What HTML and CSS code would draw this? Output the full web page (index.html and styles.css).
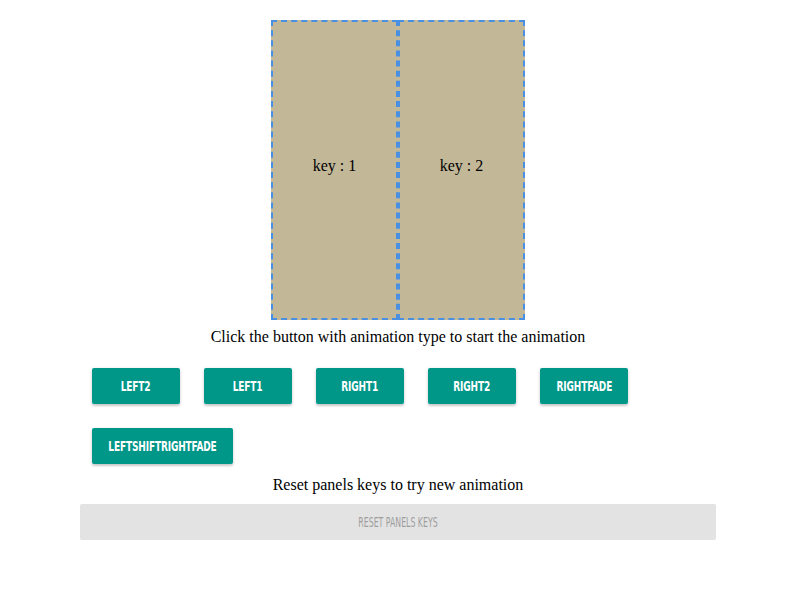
FILE: index.html
```html
<!DOCTYPE html>
<html>
<head>
<meta charset="utf-8">
<link rel="stylesheet" href="styles.css">
</head>
<body>
<div class="wrap">
  <div class="panels">
    <div class="panel">key : 1</div>
    <div class="panel">key : 2</div>
  </div>
  <p class="hint">Click the button with animation type to start the animation</p>
  <div class="buttons">
    <button class="btn"><span class="label">LEFT2</span></button>
    <button class="btn"><span class="label">LEFT1</span></button>
    <button class="btn"><span class="label">RIGHT1</span></button>
    <button class="btn"><span class="label">RIGHT2</span></button>
    <button class="btn"><span class="label">RIGHTFADE</span></button>
    <button class="btn btn-wide"><span class="label">LEFTSHIFTRIGHTFADE</span></button>
  </div>
  <p class="hint2">Reset panels keys to try new animation</p>
  <button class="reset"><span class="reset-label">RESET PANELS KEYS</span></button>
</div>
</body>
</html>
```
FILE: styles.css
```css
body {
  margin: 8px;
  font-family: "Liberation Serif", "Times New Roman", serif;
  font-size: 16px;
  color: #000;
  background: #fff;
}
.wrap {
  width: 636px;
  margin-left: 72px;
}
.panels {
  display: flex;
  justify-content: center;
  margin-top: 12px;
}
.panel {
  width: 123px;
  height: 288px;
  padding-bottom: 8px;
  background: #c2b898;
  border: 2px dashed #4a90e2;
  display: flex;
  align-items: center;
  justify-content: center;
}
.hint {
  margin: 8px 0 0;
  text-align: center;
  line-height: 18px;
}
.buttons {
  display: flex;
  flex-wrap: wrap;
  margin-top: 10px;
}
.btn {
  display: flex;
  align-items: center;
  justify-content: center;
  height: 36px;
  width: 88px;
  margin: 12px;
  padding: 0;
  border: none;
  border-radius: 2px;
  background: #009688;
  color: #fff;
  font-family: "DejaVu Sans Condensed", "Liberation Sans", sans-serif;
  font-weight: bold;
  font-size: 14.5px;
  white-space: nowrap;
  overflow: visible;
  box-shadow: 0 2px 2px rgba(0,0,0,0.14), 0 1px 4px rgba(0,0,0,0.12);
}
.btn-wide {
  width: 141px;
}
.label {
  display: inline-block;
  flex-shrink: 0;
  transform: scaleX(0.69);
  letter-spacing: -0.2px;
}
.hint2 {
  margin: 0;
  text-align: center;
  line-height: 18px;
}
.reset {
  display: block;
  width: 636px;
  height: 36px;
  margin-top: 10px;
  border: none;
  border-radius: 2px;
  background: #e3e3e3;
  color: #9e9e9e;
  font-family: "DejaVu Sans Condensed", "Liberation Sans", sans-serif;
  font-size: 14px;
  font-weight: normal;
  white-space: nowrap;
}
.reset-label {
  display: inline-block;
  transform: scaleX(0.62);
}
```
